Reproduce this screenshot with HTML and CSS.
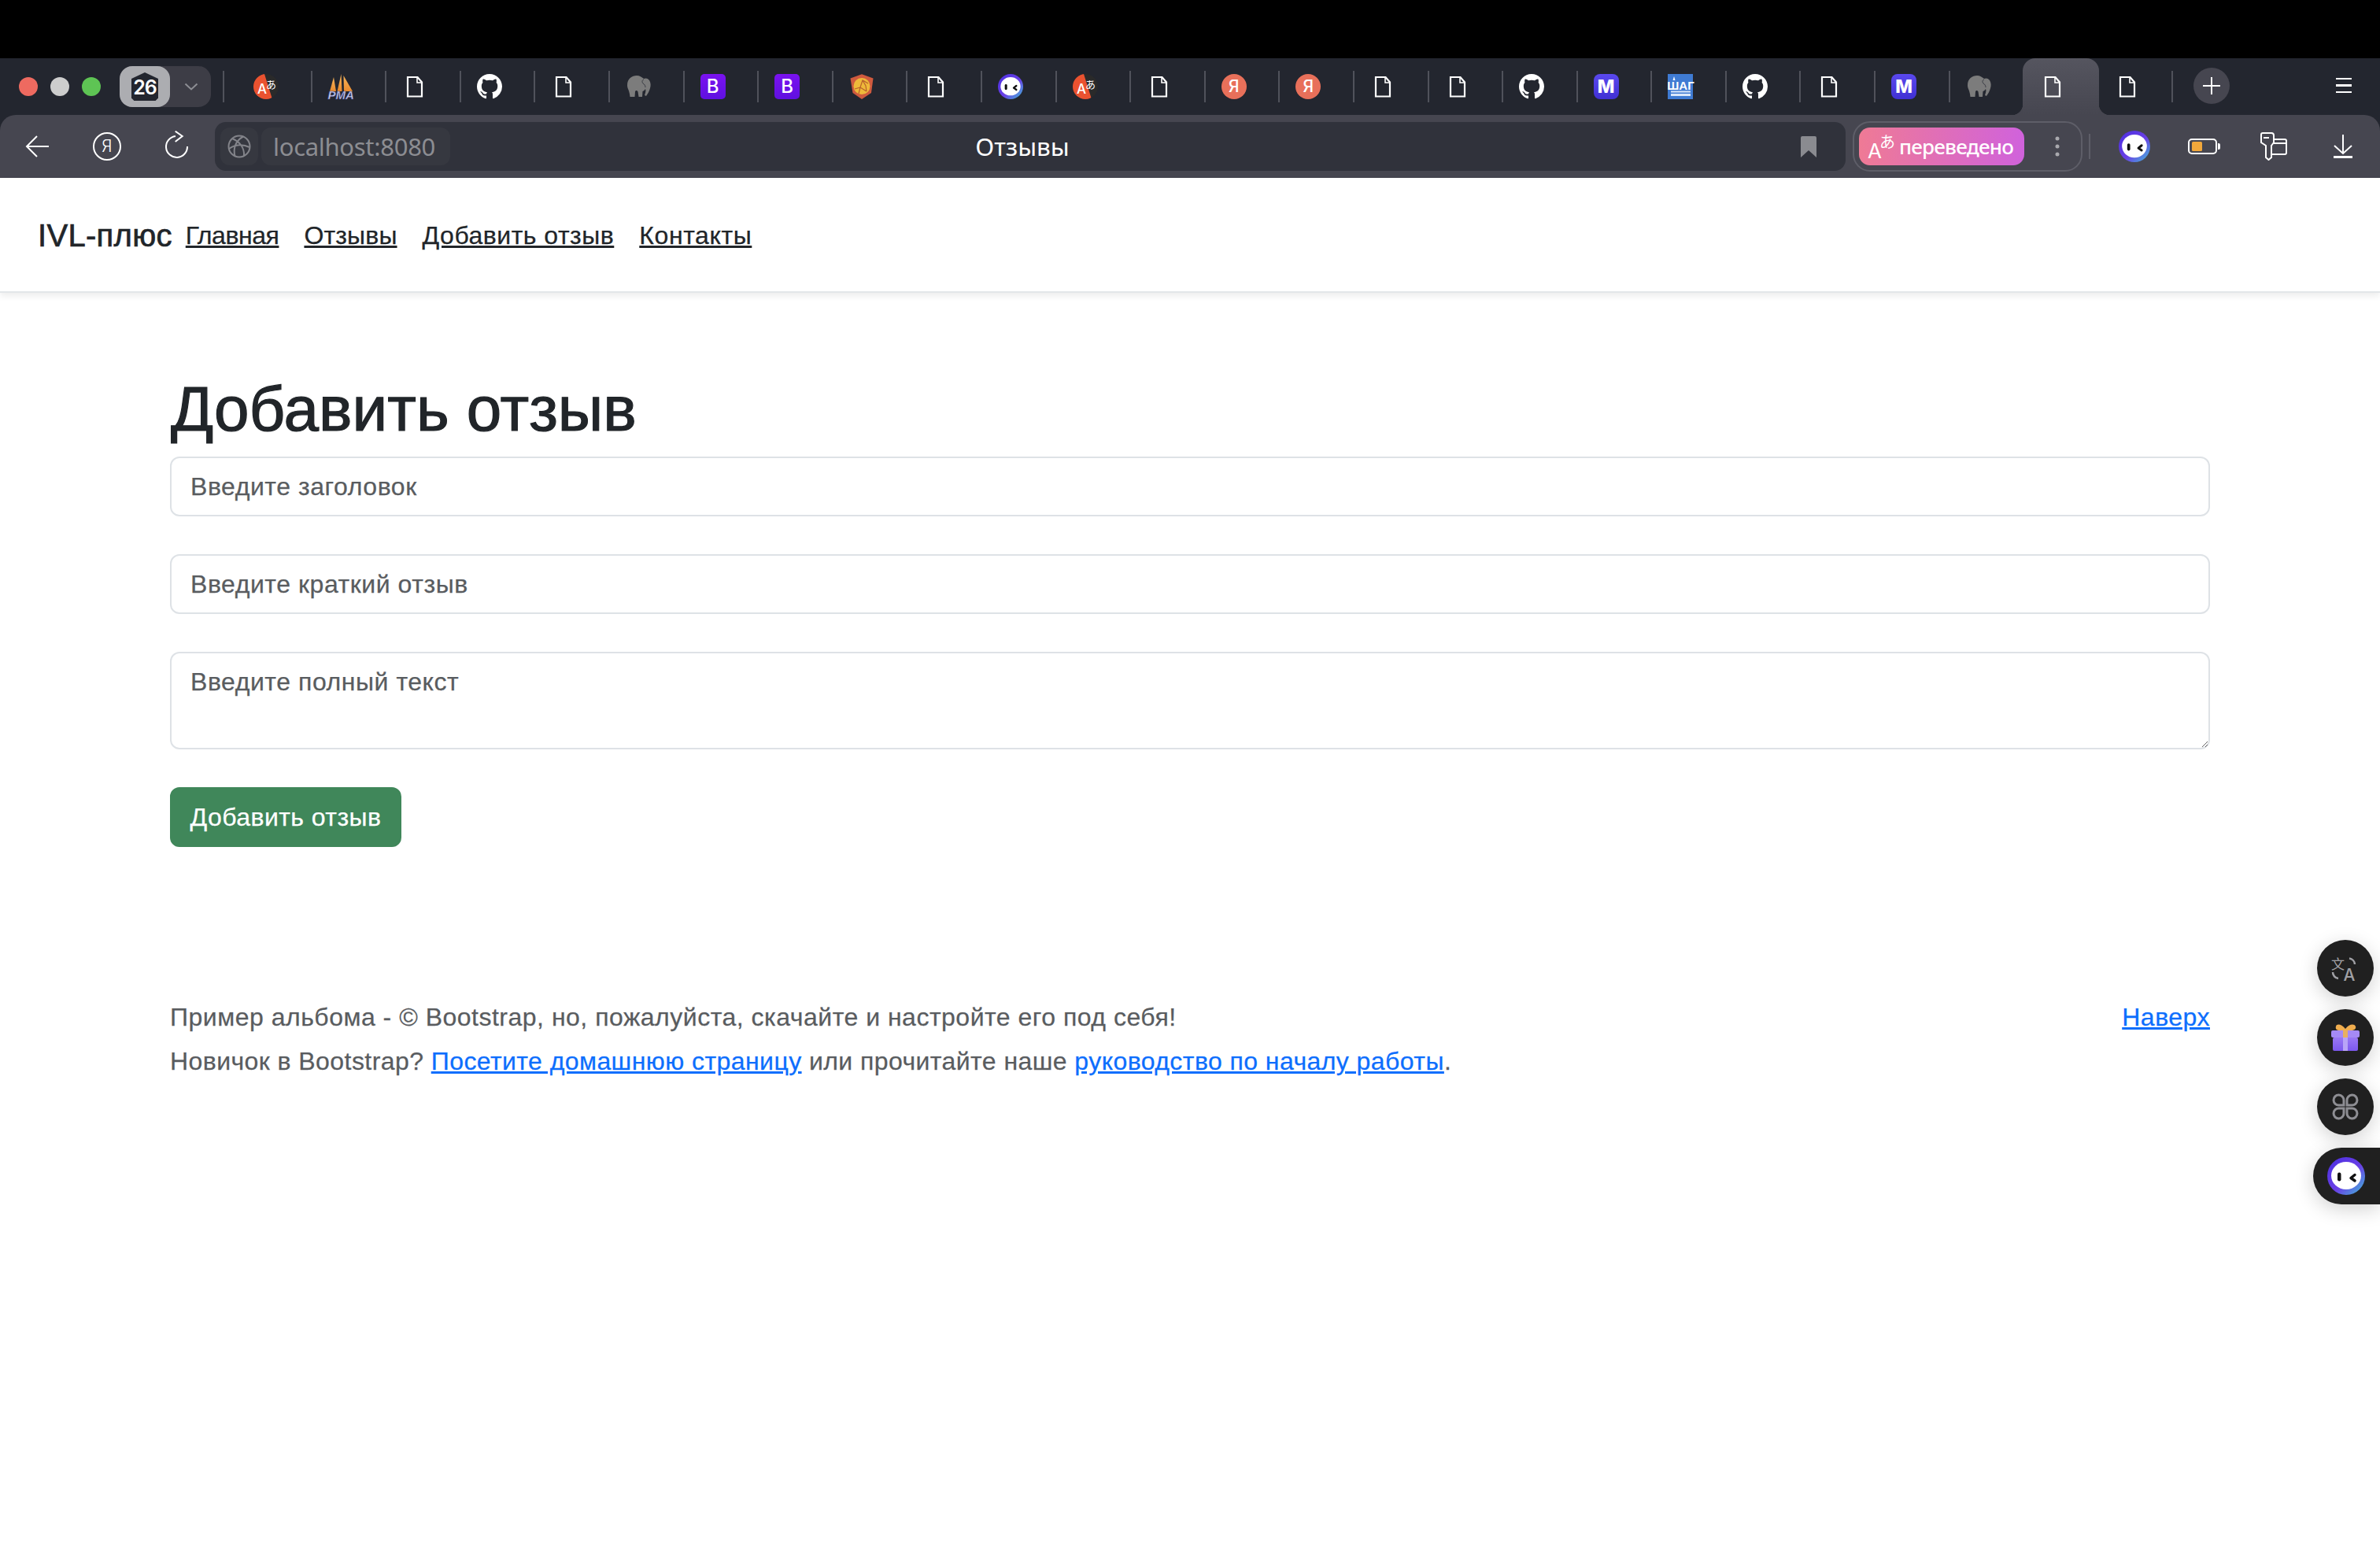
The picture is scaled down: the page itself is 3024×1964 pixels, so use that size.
FILE: index.html
```html
<!DOCTYPE html>
<html lang="ru">
<head>
<meta charset="utf-8">
<title>Отзывы</title>
<link rel="stylesheet" href="styles.css">
</head>
<body>
<svg class="sprites" width="0" height="0" aria-hidden="true">
  <defs>
    <linearGradient id="ring" x1="0" y1="0" x2="1" y2="1">
      <stop offset="0" stop-color="#4a2fe0"/><stop offset=".55" stop-color="#6a3fe6"/><stop offset="1" stop-color="#3fc0d8"/>
    </linearGradient>
    <linearGradient id="giftbox" x1="0" y1="0" x2="0" y2="1">
      <stop offset="0" stop-color="#9a78f4"/><stop offset="1" stop-color="#7c58ee"/>
    </linearGradient>
    <linearGradient id="sail" x1="0" y1="0" x2="0" y2="1">
      <stop offset="0" stop-color="#f7b55a"/><stop offset="1" stop-color="#e88a2e"/>
    </linearGradient>
    <clipPath id="disc"><circle cx="16" cy="16" r="16"/></clipPath>
  </defs>
  <symbol id="i-doc" viewBox="0 0 32 32">
    <path d="M7 4H19.5L25 10.5V28.5H7Z" fill="none" stroke="#fff" stroke-width="2.2"/>
    <path d="M19 3.5V11H25.5" fill="none" stroke="#fff" stroke-width="1.6"/>
  </symbol>
  <symbol id="i-gh" viewBox="0 0 16 16">
    <path fill="#fff" d="M8 0C3.58 0 0 3.58 0 8c0 3.54 2.29 6.53 5.47 7.59.4.07.55-.17.55-.38 0-.19-.01-.82-.01-1.49-2.01.37-2.53-.49-2.69-.94-.09-.23-.48-.94-.82-1.13-.28-.15-.68-.52-.01-.53.63-.01 1.08.58 1.23.82.72 1.21 1.87.87 2.33.66.07-.52.28-.87.51-1.07-1.78-.2-3.64-.89-3.64-3.95 0-.87.31-1.59.82-2.15-.08-.2-.36-1.02.08-2.12 0 0 .67-.21 2.2.82.64-.18 1.32-.27 2-.27.68 0 1.36.09 2 .27 1.53-1.04 2.2-.82 2.2-.82.44 1.1.16 1.92.08 2.12.51.56.82 1.27.82 2.15 0 3.07-1.87 3.75-3.65 3.95.29.25.54.73.54 1.48 0 1.07-.01 1.93-.01 2.2 0 .21.15.46.55.38A8.013 8.013 0 0016 8c0-4.42-3.58-8-8-8z"/>
  </symbol>
  <symbol id="i-elephant" viewBox="0 0 32 32">
    <path fill="#7c7c7c" d="M2 14C2 6 8 2 14 2C18 2 20 4 23 6C25 5 28 5 30 8C32 11 32 15 31 18C30 22 28 25 26 28L24 27C25 24 26 21 25 19C24 21 22 22 21.5 22L21 29H16.5L15.5 22.5C14.5 20.5 12.5 20.5 12 22.5L11.5 29H5.5C5 24 4 21 3 19C2.3 17 2 16 2 14Z"/>
    <path fill="none" stroke="#3a3c44" stroke-width="1" d="M23 7C20 8 21 11 22 12C24 13 25 15 25 17"/>
  </symbol>
  <symbol id="i-shield" viewBox="0 0 32 32">
    <path fill="#cf5a3e" d="M1.5 5.5L16 .3L30.5 5.5L28 24L16 32L4.5 24Z"/>
    <circle cx="16" cy="15.5" r="10.5" fill="#eeb93a"/>
    <path fill="none" stroke="#b8602c" stroke-width="1.2" d="M7 19L14 17L17 8L24 12M14 17L22 22M17 8L21 15L22 22M14 17L12 25"/>
  </symbol>
  <symbol id="i-face" viewBox="0 0 48 48">
    <circle cx="24" cy="24" r="24" fill="url(#ring)"/>
    <ellipse cx="24" cy="23.500" rx="19" ry="17.500" fill="#fff"/>
    <rect x="13" y="19.500" width="4.500" height="11" rx="2.200" fill="#111"/>
    <path d="M35 22.500L30 26.500L35 30" fill="none" stroke="#111" stroke-width="3.500" stroke-linecap="round" stroke-linejoin="round"/>
  </symbol>
  <symbol id="i-gift" viewBox="0 0 72 72">
    <path d="M24 22C25 18 31 19 36 25C41 19 47 18 49 22C50 25 47 27 43 27H29C25 27 23 25 24 22Z" fill="#f0ad4e"/>
    <rect x="18" y="27" width="36" height="9" rx="2" fill="#a58af6"/>
    <rect x="20" y="36" width="32" height="17" rx="2" fill="url(#giftbox)"/>
    <rect x="33" y="27" width="6" height="9" fill="#e8b060"/>
    <rect x="33" y="36" width="6" height="17" fill="#b9a4f7"/>
  </symbol>
  <symbol id="i-petals" viewBox="0 0 72 72">
    <g fill="none" stroke="#8e8e93" stroke-width="3">
      <path d="M34 34H28A6.5 6.5 0 1 1 34 28Z"/>
      <path d="M38 34H44A6.5 6.5 0 1 0 38 28Z"/>
      <path d="M34 38H28A6.5 6.5 0 1 0 34 44Z"/>
      <path d="M38 38H44A6.5 6.5 0 1 1 38 44Z"/>
    </g>
  </symbol>
</svg>

<header class="chrome">
  <div class="tabstrip">
    <div class="lights"><i class="light red"></i><i class="light grey"></i><i class="light green"></i></div>
    <div class="counter">
      <div class="counter-badge"><span class="counter-house">26</span></div>
      <svg class="counter-caret" viewBox="0 0 18 10"><path d="M1.500 1.500L9 8.500L16.500 1.500" fill="none" stroke="#8d8e94" stroke-width="2"/></svg>
    </div>
    <i class="sep lead"></i>
    <div class="tabs">
      <div class="tab"><i class="sep off"></i><svg class="fav" viewBox="0 0 32 32"><g clip-path="url(#disc)"><rect width="32" height="32" fill="#2a2a2a"/><path d="M0 0H14L24 32H0Z" fill="#ea5230"/></g><text x="5" y="25" class="fav-a">A</text><text x="16" y="17.500" class="fav-jp">あ</text></svg></div>
      <div class="tab"><i class="sep"></i><svg class="fav" viewBox="0 0 32 32"><path d="M7 4L2 22H10Z" fill="url(#sail)"/><path d="M16.500 0L11.500 22H17.500Z" fill="url(#sail)"/><path d="M19.500 2L20 22H31Z" fill="url(#sail)"/><text x="-.5" y="31.500" class="fav-pma">PMA</text></svg></div>
      <div class="tab"><i class="sep"></i><svg class="fav"><use href="#i-doc"/></svg></div>
      <div class="tab"><i class="sep"></i><svg class="fav"><use href="#i-gh"/></svg></div>
      <div class="tab"><i class="sep"></i><svg class="fav"><use href="#i-doc"/></svg></div>
      <div class="tab"><i class="sep"></i><svg class="fav"><use href="#i-elephant"/></svg></div>
      <div class="tab"><i class="sep"></i><span class="fav letter boot">B</span></div>
      <div class="tab"><i class="sep"></i><span class="fav letter boot">B</span></div>
      <div class="tab"><i class="sep"></i><svg class="fav"><use href="#i-shield"/></svg></div>
      <div class="tab"><i class="sep"></i><svg class="fav"><use href="#i-doc"/></svg></div>
      <div class="tab"><i class="sep"></i><svg class="fav"><use href="#i-face"/></svg></div>
      <div class="tab"><i class="sep"></i><svg class="fav" viewBox="0 0 32 32"><g clip-path="url(#disc)"><rect width="32" height="32" fill="#2a2a2a"/><path d="M0 0H14L24 32H0Z" fill="#ea5230"/></g><text x="5" y="25" class="fav-a">A</text><text x="16" y="17.500" class="fav-jp">あ</text></svg></div>
      <div class="tab"><i class="sep"></i><svg class="fav"><use href="#i-doc"/></svg></div>
      <div class="tab"><i class="sep"></i><span class="fav letter ya">Я</span></div>
      <div class="tab"><i class="sep"></i><span class="fav letter ya">Я</span></div>
      <div class="tab"><i class="sep"></i><svg class="fav"><use href="#i-doc"/></svg></div>
      <div class="tab"><i class="sep"></i><svg class="fav"><use href="#i-doc"/></svg></div>
      <div class="tab"><i class="sep"></i><svg class="fav"><use href="#i-gh"/></svg></div>
      <div class="tab"><i class="sep"></i><span class="fav letter em">M</span></div>
      <div class="tab"><i class="sep"></i><svg class="fav" viewBox="0 0 32 32"><rect width="32" height="32" fill="#3f7bd3"/><path d="M8 3L9.500 8H6.500Z" fill="#fff"/><text x="16.500" y="20" class="fav-shag">ШАГ</text><rect x="4" y="21.500" width="25" height="2" fill="#dbe7fa"/><rect x="4" y="25" width="25" height="3" fill="#dbe7fa"/></svg></div>
      <div class="tab"><i class="sep"></i><svg class="fav"><use href="#i-gh"/></svg></div>
      <div class="tab"><i class="sep"></i><svg class="fav"><use href="#i-doc"/></svg></div>
      <div class="tab"><i class="sep"></i><span class="fav letter em">M</span></div>
      <div class="tab"><i class="sep"></i><svg class="fav"><use href="#i-elephant"/></svg></div>
      <div class="tab active"><i class="sep off"></i><svg class="fav"><use href="#i-doc"/></svg></div>
      <div class="tab"><i class="sep off"></i><svg class="fav"><use href="#i-doc"/></svg></div>
    </div>
    <i class="sep"></i>
    <div class="newtab"><svg viewBox="0 0 22 22"><path d="M11 0V22M0 11H22" stroke="#fff" stroke-width="2"/></svg></div>
    <div class="burger"><i></i><i></i><i></i></div>
  </div>

  <div class="toolbar">
    <div class="nav-btn">
      <svg class="tool-icon" viewBox="0 0 40 40"><path d="M34 20H6M19 7L6 20L19 33" fill="none" stroke="#fff" stroke-width="2"/></svg>
    </div>
    <div class="nav-btn">
      <span class="ya-round">Я</span>
    </div>
    <div class="nav-btn">
      <svg class="tool-icon" viewBox="0 0 40 40"><path d="M19 7A13.500 13.500 0 1 0 34 20" fill="none" stroke="#fff" stroke-width="2"/><path d="M18.700 .700L27.700 7L18.700 14" fill="none" stroke="#fff" stroke-width="2"/></svg>
    </div>
    <div class="address">
      <div class="chip globe">
        <svg viewBox="0 0 30 30"><g fill="none" stroke="#83848a" stroke-width="2"><circle cx="15" cy="15" r="13.500"/><path d="M20 2.500C10 8 7 18 9.500 27.500M2 18C10 12 20 12 28 16M6 5C14 8 22 16 21 27"/></g></svg>
      </div>
      <div class="chip url">localhost:8080</div>
      <div class="page-title">Отзывы</div>
      <svg class="bookmark" viewBox="0 0 20 27"><path d="M2 0H18A2 2 0 0 1 20 2V27L10 18L0 27V2A2 2 0 0 1 2 0Z" fill="#8a8b90"/></svg>
    </div>
    <div class="translate-group">
      <div class="translate-pill">
        <span class="tp-a">A</span><span class="tp-jp">あ</span><span class="tp-text">переведено</span>
      </div>
      <svg class="dots" viewBox="0 0 6 26"><g fill="#a9a9ae"><circle cx="3" cy="3" r="2.500"/><circle cx="3" cy="13" r="2.500"/><circle cx="3" cy="23" r="2.500"/></g></svg>
    </div>
    <i class="tool-div"></i>
    <div class="ext-row">
      <svg class="ext-face"><use href="#i-face"/></svg>
      <svg class="ext-battery" viewBox="0 0 42 20"><rect x="1" y="1" width="35" height="18" rx="4" fill="none" stroke="#fff" stroke-width="2"/><rect x="5" y="4" width="13" height="12" rx="1.500" fill="#f2a83b"/><path d="M38 6H39A2 2 0 0 1 41 8V12A2 2 0 0 1 39 14H38Z" fill="#fff"/></svg>
      <svg class="ext-key" viewBox="0 0 36 36"><g fill="none" stroke="#fff" stroke-width="2"><path d="M4 1H15A3 3 0 0 1 18 4V13L15 17V32L11.500 35L8 32V17L2 13V3A2 2 0 0 1 4 1Z"/><path d="M18 9H32A2 2 0 0 1 34 11V26A2 2 0 0 1 32 28H15"/><path d="M18 14H34"/><path d="M5 7H12"/></g></svg>
      <svg class="ext-down" viewBox="0 0 26 30"><path d="M13 0V24M2 14L13 24L24 14" fill="none" stroke="#fff" stroke-width="2"/><path d="M1 28.500H25" stroke="#fff" stroke-width="3"/></svg>
    </div>
  </div>
</header>

<nav class="navbar">
  <a class="brand" href="#">IVL-плюс</a>
  <a class="nav-link" href="#">Главная</a>
  <a class="nav-link" href="#">Отзывы</a>
  <a class="nav-link" href="#">Добавить отзыв</a>
  <a class="nav-link" href="#">Контакты</a>
</nav>

<main class="container main">
  <h1 class="title">Добавить отзыв</h1>
  <form class="form">
    <input class="control" type="text" placeholder="Введите заголовок">
    <input class="control" type="text" placeholder="Введите краткий отзыв">
    <textarea class="control area" placeholder="Введите полный текст"></textarea>
    <button class="btn-add" type="button">Добавить отзыв</button>
  </form>
</main>

<footer class="container footer">
  <div class="footer-row">
    <p>Пример альбома - © Bootstrap, но, пожалуйста, скачайте и настройте его под себя!</p>
    <a href="#">Наверх</a>
  </div>
  <p class="footer-second">Новичок в Bootstrap? <a href="#">Посетите домашнюю страницу</a> или прочитайте наше <a href="#">руководство по началу работы</a>.</p>
</footer>

<aside class="floaters">
  <div class="floater">
    <svg viewBox="0 0 72 72"><g fill="none" stroke="#a0a0a5" stroke-width="2.500"><path d="M41 23.500A8 8 0 0 1 48 31"/><path d="M20 41A8 8 0 0 0 27 49"/></g><text x="18" y="37" class="fl-cn">文</text><text x="33.500" y="51.500" class="fl-a">A</text></svg>
  </div>
  <div class="floater"><svg><use href="#i-gift"/></svg></div>
  <div class="floater"><svg><use href="#i-petals"/></svg></div>
  <div class="floater wide"><svg class="wide-face"><use href="#i-face"/></svg></div>
</aside>
</body>
</html>
```
FILE: styles.css
```css
* { box-sizing: border-box; }
html, body { margin: 0; padding: 0; }
body {
  width: 3024px;
  height: 1964px;
  overflow: hidden;
  background: #fff;
  color: #212529;
  font-family: "Liberation Sans", Arial, sans-serif;
  font-size: 32px;
  line-height: 48px;
  position: relative;
}
.sprites { position: absolute; }

/* browser chrome */
.chrome { background: #23262f; padding-top: 74px; border-top: 0; position: relative; }
.chrome::before { content: ""; position: absolute; left: 0; right: 0; top: 0; height: 74px; background: #000; }
.tabstrip { height: 72px; display: flex; align-items: center; position: relative; }
.lights { display: flex; gap: 16px; margin-left: 24px; }
.light { width: 24px; height: 24px; border-radius: 50%; display: block; }
.light.red { background: #ee6a60; }
.light.grey { background: #cdcdcd; }
.light.green { background: #5ec454; }
.counter {
  margin-left: 24px;
  width: 116px;
  height: 52px;
  border-radius: 16px;
  background: #3d3d46;
  display: flex;
  align-items: center;
}
.counter-badge {
  width: 64px;
  height: 52px;
  border-radius: 16px;
  background: #acadb1;
  display: flex;
  align-items: center;
  justify-content: center;
}
.counter-house {
  width: 34px;
  height: 36px;
  background: #23262f;
  color: #fff;
  font: 600 25px/38px "Inter", sans-serif;
  text-align: center;
  letter-spacing: -1px;
  clip-path: polygon(50% 0, 100% 22%, 100% 90%, 90% 100%, 10% 100%, 0 90%, 0 22%);
}
.counter-caret { width: 18px; height: 10px; margin-left: 18px; }
.sep { display: block; flex: none; width: 2px; height: 40px; background: #50525b; }
.sep.off { background: transparent; }
.sep.lead { margin-left: 15px; margin-right: 15px; }
.tabs { display: flex; }
.tab {
  width: 94.6px;
  height: 72px;
  flex: none;
  display: flex;
  align-items: center;
  gap: 20px;
  position: relative;
}
.tab.active {
  width: 97px;
  margin-right: -2.4px;
  background: linear-gradient(#55555f, #464650);
  border-radius: 16px 16px 0 0;
}
.tab.active::before,
.tab.active::after {
  content: "";
  position: absolute;
  bottom: 0;
  width: 14px;
  height: 14px;
}
.tab.active::before { left: -14px; background: radial-gradient(circle at 0 0, transparent 14px, #464650 14.5px); }
.tab.active::after { right: -14px; background: radial-gradient(circle at 100% 0, transparent 14px, #464650 14.5px); }
.fav { width: 32px; height: 32px; flex: none; display: block; overflow: visible; }
.fav-a { font: 500 17px "Inter", sans-serif; fill: #fff; }
.fav-jp { font: 400 13px "Noto Sans CJK JP", sans-serif; fill: #fff; }
.fav-pma { font: italic 700 15px "Liberation Sans", sans-serif; fill: #cdd0ea; stroke: #3a3f86; stroke-width: .5px; }
.fav-shag { font: 700 15px "Liberation Sans", sans-serif; fill: #fff; text-anchor: middle; }
.letter {
  display: flex;
  align-items: center;
  justify-content: center;
  color: #fff;
  font-family: "Inter", sans-serif;
}
.boot { background: linear-gradient(#7a12f0, #5f10e0); border-radius: 5px; font-size: 24px; font-weight: 500; }
.em { background: linear-gradient(#5a48ee, #4030d4); border-radius: 8px; font-size: 23px; font-weight: 800; }
.ya { background: #e8705a; border-radius: 50%; font-size: 21px; font-weight: 500; }
.newtab {
  width: 46px;
  height: 46px;
  margin-left: 26px;
  margin-top: -2px;
  border-radius: 50%;
  background: #464650;
  display: flex;
  align-items: center;
  justify-content: center;
}
.newtab svg { width: 22px; height: 22px; }
.burger {
  width: 20px;
  margin-left: 135px;
  margin-top: -3px;
  display: flex;
  flex-direction: column;
  gap: 6px;
}
.burger i { display: block; height: 2.5px; background: #fff; }

.toolbar {
  height: 80px;
  background: #464650;
  border-radius: 20px 20px 0 0;
  display: flex;
  align-items: center;
  padding-left: 4px;
}
.nav-btn { width: 88px; height: 80px; display: flex; align-items: center; justify-content: center; flex: none; }
.tool-icon { width: 40px; height: 40px; }
.ya-round {
  width: 36px;
  height: 36px;
  border: 2px solid #fff;
  border-radius: 50%;
  color: #fff;
  font: 300 21px/32px "Inter", sans-serif;
  text-align: center;
}
.address {
  margin-left: 5px;
  width: 2072px;
  height: 62px;
  border-radius: 14px;
  background: #30323b;
  display: flex;
  align-items: center;
  padding-left: 7px;
  flex: none;
}
.chip { background: #363840; height: 48px; border-radius: 12px; display: flex; align-items: center; justify-content: center; flex: none; }
.chip.globe { width: 48px; margin-right: 4px; }
.chip.globe svg { width: 30px; height: 30px; }
.chip.url { width: 240px; padding-right: 4px; color: #8c8d92; font: 400 31px/48px "Noto Sans", sans-serif; letter-spacing: -.3px; }
.page-title { flex: 1; margin-right: 262px; text-align: center; color: #fff; font: 400 31.5px/48px "Noto Sans", sans-serif; }
.bookmark { width: 20px; height: 27px; margin-right: 37px; flex: none; }
.translate-group {
  margin-left: 9px;
  width: 292px;
  height: 64px;
  border: 2px solid #5e5e68;
  border-radius: 22px;
  padding-left: 6px;
  display: flex;
  align-items: center;
  flex: none;
}
.translate-pill {
  width: 210px;
  height: 48px;
  border-radius: 14px;
  background: linear-gradient(90deg, #ef7a95, #d062dc);
  color: #fff;
  display: flex;
  align-items: center;
  padding-left: 11px;
  position: relative;
  flex: none;
}
.tp-a { font: 400 26px/26px "Inter", sans-serif; margin-top: 12px; }
.tp-jp { font: 400 20px/20px "Noto Sans CJK JP", sans-serif; margin-top: -12px; margin-left: -3px; margin-right: 5px; }
.tp-text { font: 500 26px/48px "Noto Sans", sans-serif; letter-spacing: -.8px; }
.dots { width: 6px; height: 26px; margin-left: 39px; }
.tool-div { width: 2px; height: 32px; background: #5e5e68; margin-left: 8px; flex: none; }
.ext-row { display: flex; align-items: center; flex: none; }
.ext-face { width: 40px; height: 40px; margin-left: 36px; }
.ext-battery { width: 42px; height: 20px; margin-left: 48px; }
.ext-key { width: 36px; height: 36px; margin-left: 49px; }
.ext-down { width: 26px; height: 30px; margin-left: 57px; }

/* page */
.navbar {
  height: 146px;
  padding: 2px 48px 0;
  display: flex;
  align-items: center;
  background: #fff;
  box-shadow: 0 4px 8px rgba(0,0,0,.075);
  border-bottom: 2px solid #e3e6e9;
  position: relative;
  -webkit-text-stroke: .25px currentColor;
}
.brand { font-size: 40px; color: #212529; text-decoration: none; margin-right: 17px; letter-spacing: .3px; -webkit-text-stroke: .7px currentColor; }
.nav-link { color: #212529; margin-right: 32px; letter-spacing: .5px; }
.brand + .nav-link { letter-spacing: -.45px; }
.brand + .nav-link + .nav-link { letter-spacing: .15px; }
.nav-link:last-child { letter-spacing: .6px; }
.container { width: 2640px; margin: 0 auto; padding-left: 24px; padding-right: 24px; }
.main { padding-top: 100px; padding-bottom: 96px; }
.title { font-size: 80px; line-height: 96px; font-weight: 400; margin: 0 0 12px; padding-left: 1px; -webkit-text-stroke: 1.2px currentColor; }
.form { display: flex; flex-direction: column; align-items: flex-start; }
.control {
  display: block;
  width: 100%;
  height: 76px;
  margin-bottom: 48px;
  padding: 12px 24px;
  border: 2px solid #dee2e6;
  border-radius: 12px;
  background: #fff;
  color: #212529;
  font: 32px/48px "Liberation Sans", Arial, sans-serif;
  letter-spacing: .55px;
  -webkit-text-stroke: .25px currentColor;
}
.control::placeholder { color: #595c5f; opacity: 1; }
.area { height: 124px; }
.btn-add {
  height: 76px;
  width: 294px;
  padding: 0;
  border: 2px solid #40875a;
  border-radius: 12px;
  background: #40875a;
  color: #fff;
  font: 32px/48px "Liberation Sans", Arial, sans-serif;
  letter-spacing: .45px;
  -webkit-text-stroke: .25px currentColor;
}
.footer { padding-top: 96px; color: #595c5f; letter-spacing: .5px; -webkit-text-stroke: .25px currentColor; }
.footer p { margin: 0 0 8px; }
.footer .footer-second { letter-spacing: .43px; }
.footer-row { display: flex; justify-content: space-between; }
.footer a { color: #0d6efd; }

/* floating widgets */
.floaters {
  position: absolute;
  right: 0;
  top: 1194px;
  width: 85px;
  display: flex;
  flex-direction: column;
  align-items: flex-start;
  gap: 16px;
}
.floater {
  width: 72px;
  height: 72px;
  margin-left: 5px;
  border-radius: 50%;
  background: #202020;
  box-shadow: 0 6px 24px rgba(0,0,0,.18);
}
.floater svg { display: block; width: 72px; height: 72px; }
.fl-cn { font: 400 17px "Noto Sans CJK SC", sans-serif; fill: #a0a0a5; }
.fl-a { font: 500 21px "Inter", sans-serif; fill: #a0a0a5; }
.floater.wide {
  width: 85px;
  margin-left: 0;
  border-radius: 36px 0 0 36px;
  display: flex;
  align-items: center;
  padding-left: 18px;
}
.floater svg.wide-face { width: 48px; height: 48px; }
```
